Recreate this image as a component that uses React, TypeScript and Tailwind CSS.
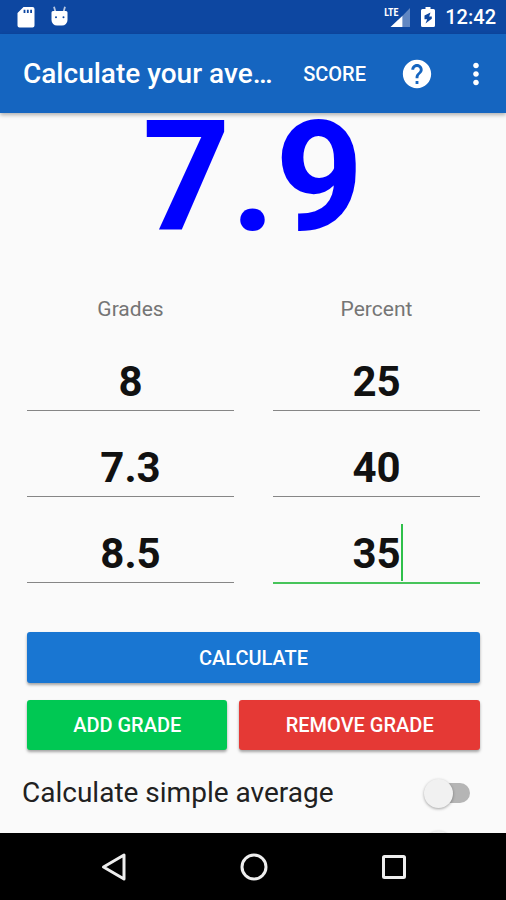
import * as React from "react";
import clsx from "clsx";
import { MdHelp, MdMoreVert } from "react-icons/md";

const rows = [
  { grade: "8", percent: "25" },
  { grade: "7.3", percent: "40" },
  { grade: "8.5", percent: "35" },
];

function StatusBar() {
  return (
    <div className="flex h-[34px] shrink-0 items-center justify-between bg-[#0d47a1] pr-[10px] pl-[17px] text-white">
      <div className="flex items-center gap-4">
        <svg width="18" height="22" viewBox="0 0 18 22">
          <path
            fillRule="evenodd"
            fill="currentColor"
            d="M6.5 1H15.5a2 2 0 0 1 2 2V19.5a2 2 0 0 1-2 2H2.500a2 2 0 0 1-2-2V7zM6.600 3.700V7H8.400V3.700zM9.900 3.700V7H11.700V3.700zM13.200 3.700V7H15V3.700z"
          />
        </svg>
        <svg width="18" height="22" viewBox="0 0 18 22">
          <path
            fillRule="evenodd"
            fill="currentColor"
            d="M2 5H15A1.500 1.500 0 0 1 16.500 6.500V14a5.500 5.500 0 0 1-5.500 5.500H6a5.500 5.500 0 0 1-5.500-5.500V6.500A1.500 1.500 0 0 1 2 5zM5 10.300a1 1 0 0 0 0 2a1 1 0 0 0 0-2zM12.500 10.300a1 1 0 0 0 0 2a1 1 0 0 0 0-2z"
          />
          <path d="M3 .8L4.500 6M14 .8L12.500 6" stroke="currentColor" strokeWidth="1.800" opacity=".7" />
        </svg>
      </div>
      <div className="flex items-center">
        <div className="relative mr-[11px] h-[22px] w-[26px]">
          <span className="absolute top-[2px] left-0 font-['Roboto_Condensed','Liberation_Sans_Narrow',Roboto,sans-serif] text-[10px] leading-[10px] font-bold">
            LTE
          </span>
          <svg width="26" height="22" viewBox="0 0 26 22">
            <path d="M26 2V21H18.500V9.700z" fill="#fff" opacity=".35" />
            <path d="M6.500 21L18.500 9.700V21z" fill="#fff" />
          </svg>
        </div>
        <svg className="mr-[10px]" width="14" height="22" viewBox="0 0 14 22">
          <path
            fillRule="evenodd"
            fill="currentColor"
            d="M4.500 1H9.500V3H12.500A1.500 1.500 0 0 1 14 4.500V19.500A1.500 1.500 0 0 1 12.500 21H1.500A1.500 1.500 0 0 1 0 19.500V4.500A1.500 1.500 0 0 1 1.500 3H4.500zM9.500 6.500L3.500 9.500V13.200H6.200L4.500 17.500L10.800 12.800V10.500H8.200z"
          />
        </svg>
        <span className="text-[20px] leading-[24px] font-medium">12:42</span>
      </div>
    </div>
  );
}

function Toolbar() {
  return (
    <header className="z-10 flex h-[79px] shrink-0 items-center bg-[#1565c0] pr-[13px] pl-[23px] text-white shadow-[0_2px_4px_rgba(0,0,0,0.3)]">
      <h1 className="min-w-0 flex-1 text-[28px] leading-[38px] font-medium whitespace-nowrap">Calculate your ave…</h1>
      <button className="ml-[24px] text-[20px] leading-[28px] font-medium">SCORE</button>
      <button className="ml-[34px]" aria-label="Help">
        <MdHelp size={34} />
      </button>
      <button className="ml-[25px]" aria-label="More options">
        <MdMoreVert size={34} />
      </button>
    </header>
  );
}

interface FieldProps {
  label: string;
  value: string;
  active?: boolean;
}

function Field({ label, value, active }: FieldProps) {
  return (
    <div className="relative h-[60px]">
      <input
        type="text"
        inputMode="decimal"
        aria-label={label}
        defaultValue={value}
        className={clsx(
          "w-full text-center text-[42px] font-bold text-[#111111] outline-none",
          active ? "h-[60px] border-b-2 border-[#46c45a]" : "h-[59px] border-b border-[#868686]"
        )}
      />
      {active && <span className="absolute top-0 left-1/2 ml-[24px] h-[57px] w-[2px] bg-[#2fc04a]" />}
    </div>
  );
}

interface ActionProps {
  className: string;
  children: React.ReactNode;
}

function Action({ className, children }: ActionProps) {
  return (
    <button
      className={clsx(
        "rounded-[3px] text-[20px] font-medium text-white shadow-[0_2px_3px_rgba(0,0,0,0.35)]",
        className
      )}>
      {children}
    </button>
  );
}

export default function App() {
  return (
    <div className="flex h-screen flex-col bg-[#fafafa] font-[Roboto,sans-serif]">
      <StatusBar />
      <Toolbar />

      <main className="min-h-0 flex-1 overflow-hidden">
        <output className="block text-center text-[154px] leading-[130px] font-bold text-[#0000ff]">7.9</output>

        <div className="mt-[52px] grid grid-cols-2 gap-x-[39px] gap-y-[26px] pr-[26px] pl-[27px]">
          <div className="pb-[3px] text-center text-[21px] leading-[28px] text-[#757575]">Grades</div>
          <div className="pb-[3px] text-center text-[21px] leading-[28px] text-[#757575]">Percent</div>
          {rows.map((row, i) => (
            <React.Fragment key={i}>
              <Field label="Grades" value={row.grade} />
              <Field label="Percent" value={row.percent} active={i === rows.length - 1} />
            </React.Fragment>
          ))}
        </div>

        <div className="mt-[48px] grid grid-cols-[5fr_6fr] gap-x-[12px] gap-y-[17px] pr-[26px] pl-[27px]">
          <Action className="col-span-2 h-[51px] bg-[#1976d2]">CALCULATE</Action>
          <Action className="h-[50px] bg-[#00c853]">ADD GRADE</Action>
          <Action className="h-[50px] bg-[#e53935]">REMOVE GRADE</Action>
        </div>

        <div className="mt-[25px] flex h-[36px] items-center justify-between pr-[36px] pl-[22px]">
          <label htmlFor="simple" className="text-[28px] leading-[36px] text-[#212121]">
            Calculate simple average
          </label>
          <input
            id="simple"
            type="checkbox"
            role="switch"
            className="flex h-[20px] w-[42px] appearance-none items-center rounded-full bg-[#b5b5b5] before:-ml-[4px] before:size-[29px] before:rounded-full before:bg-[#f1f1f1] before:shadow-[0_1px_3px_rgba(0,0,0,0.35)] checked:before:ml-[17px]"
          />
        </div>

        {/* thumb of the next row, cut off by the nav bar */}
        <div className="mt-[20px] flex justify-end pr-[53px]">
          <span className="size-[29px] rounded-full bg-[#f1f1f1] shadow-[0_1px_3px_rgba(0,0,0,0.35)]" />
        </div>
      </main>

      <nav className="flex h-[67px] shrink-0 items-center justify-center gap-[100px] bg-black pl-[2px] text-[#eeeeee]">
        <button aria-label="Back">
          <svg width="40" height="40" viewBox="0 0 40 40" fill="none" stroke="currentColor" strokeWidth="3">
            <path d="M30 8V32L9.500 20z" strokeLinejoin="round" />
          </svg>
        </button>
        <button aria-label="Home">
          <svg width="40" height="40" viewBox="0 0 40 40" fill="none" stroke="currentColor" strokeWidth="3">
            <circle cx="20" cy="20" r="12" />
          </svg>
        </button>
        <button aria-label="Recents">
          <svg width="40" height="40" viewBox="0 0 40 40" fill="none" stroke="currentColor" strokeWidth="3">
            <rect x="9.500" y="9.500" width="21" height="21" rx="1" />
          </svg>
        </button>
      </nav>
    </div>
  );
}
